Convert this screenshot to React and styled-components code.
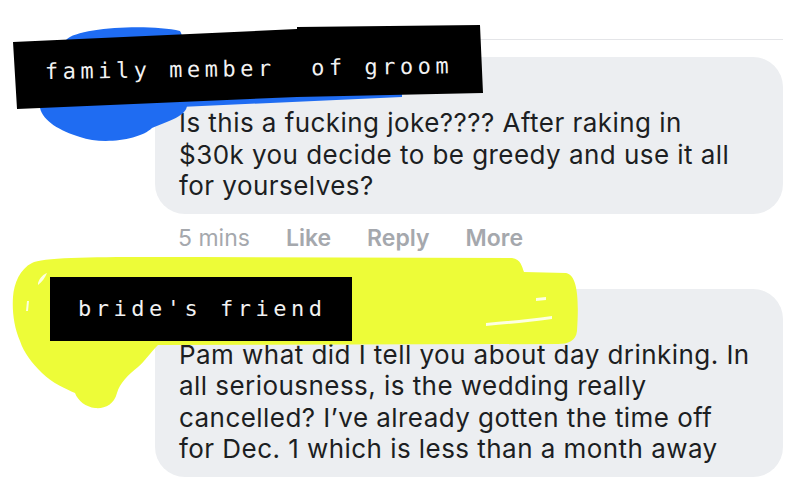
import React from "react";
import styled, { createGlobalStyle } from "styled-components";

const GlobalStyle = createGlobalStyle`
  html, body {
    margin: 0;
    padding: 0;
    background: #ffffff;
  }
  body {
    font-family: Inter, "Liberation Sans", Arial, sans-serif;
  }
`;

const Page = styled.div`
  position: relative;
  box-sizing: border-box;
  width: 800px;
  height: 482px;
  overflow: hidden;
  padding: 39px 17px 0 155px;
  background: #ffffff;
`;

const Divider = styled.div`
  height: 1px;
  background: #e4e5e8;
`;

const Comment = styled.div`
  position: relative;
  margin-top: ${(p) => p.$gap}px;
`;

const Bubble = styled.div`
  background: #eceef1;
  border-radius: 30px;
  padding: 50px 24px 12px 24px;
  color: #1c1e22;
  font-size: 26px;
  line-height: 31.5px;
  letter-spacing: 0.45px;
`;

const Line = styled.span`
  display: block;
  white-space: nowrap;
`;

const Actions = styled.div`
  display: flex;
  gap: 36px;
  margin-top: 11px;
  padding-left: 23px;
  font-size: 23px;
  line-height: 26px;
  color: #a5a8ad;
`;

const Action = styled.span`
  font-weight: ${(p) => (p.$strong ? 600 : 400)};
`;

const Marker = styled.svg`
  position: absolute;
  left: ${(p) => p.$left}px;
  top: ${(p) => p.$top}px;
  pointer-events: none;
  overflow: visible;
`;

const Redaction = styled.div`
  position: absolute;
  box-sizing: border-box;
  left: ${(p) => p.$left}px;
  top: ${(p) => p.$top}px;
  width: ${(p) => p.$width}px;
  height: ${(p) => p.$height}px;
  display: flex;
  align-items: center;
  padding: ${(p) => p.$pad};
  background: #000000;
  clip-path: ${(p) => p.$clip || "none"};
`;

const Tag = styled.span`
  display: block;
  white-space: pre;
  font-family: "DejaVu Sans Mono", "Liberation Mono", monospace;
  font-size: 22px;
  line-height: 24px;
  letter-spacing: 4.5px;
  color: #f2f2f2;
  transform: rotate(${(p) => p.$tilt || 0}deg);
  transform-origin: left center;
`;

function BlueScribble() {
  return (
    <Marker $left={-120} $top={-37} width="375" height="130" viewBox="35 20 375 130">
      <path
        fill="#1f6cf2"
        d="M66 40 C78 27 150 24 180 31 C186 40 186 80 187 104 C188 116 168 121 152 128
           C140 140 102 145 80 137 C60 131 43 121 40 108 L40 60 C44 50 56 44 66 40 Z"
      />
      <path fill="#1f6cf2" d="M180 101 L402 92 L402 97 L180 107 Z" />
    </Marker>
  );
}

function YellowScribble() {
  return (
    <Marker $left={-150} $top={-38} width="580" height="162" viewBox="5 250 580 162">
      <path
        fill="#edfc38"
        d="M32 262 C44 255 120 256 200 256 L512 257 C521 258 522 266 524 271 L566 272
           C578 274 579 300 577 330 C576 340 568 343 558 343 L158 344
           C150 352 145 360 138 366 C128 374 120 382 117 392 C114 404 104 408 95 407
           C86 406 78 400 75 392 C66 388 52 382 42 372 C32 362 24 352 20 340
           C14 326 12 310 13 296 C14 282 20 268 32 262 Z"
      />
      <path
        fill="#ffffff"
        opacity="0.85"
        d="M38 282 C40 276 44 273 47 272 C45 277 42 281 38 284 Z M27 300 L29 300 L28 310 L26 310 Z
           M536 297 L546 296 L546 299 L536 300 Z M486 322 C510 320 530 318 552 315 L552 318 C530 321 510 323 486 325 Z"
      />
    </Marker>
  );
}

export default function App() {
  return (
    <>
      <GlobalStyle />
      <Page>
        <Divider />
        <Comment $gap={17}>
          <Bubble>
            <Line>Is this a fucking joke???? After raking in</Line>
            <Line>$30k you decide to be greedy and use it all</Line>
            <Line>for yourselves?</Line>
          </Bubble>
          <Actions>
            <Action>5 mins</Action>
            <Action $strong>Like</Action>
            <Action $strong>Reply</Action>
            <Action $strong>More</Action>
          </Actions>
          <BlueScribble />
          <Redaction
            $left={-142}
            $top={-32}
            $width={471}
            $height={85}
            $pad="8px 0 0 32px"
            $clip="polygon(0px 17px, 284px 4px, 284px 2px, 467px 0px, 470px 68px, 284px 72px, 4px 84px)"
          >
            <Tag $tilt={-0.8}>{"family member  of groom"}</Tag>
          </Redaction>
        </Comment>
        <Comment $gap={38}>
          <Bubble>
            <Line>Pam what did I tell you about day drinking. In</Line>
            <Line>all seriousness, is the wedding really</Line>
            <Line>cancelled? I’ve already gotten the time off</Line>
            <Line>for Dec. 1 which is less than a month away</Line>
          </Bubble>
          <YellowScribble />
          <Redaction $left={-105} $top={-12} $width={302} $height={64} $pad="0 0 0 28px">
            <Tag>bride's friend</Tag>
          </Redaction>
        </Comment>
      </Page>
    </>
  );
}
